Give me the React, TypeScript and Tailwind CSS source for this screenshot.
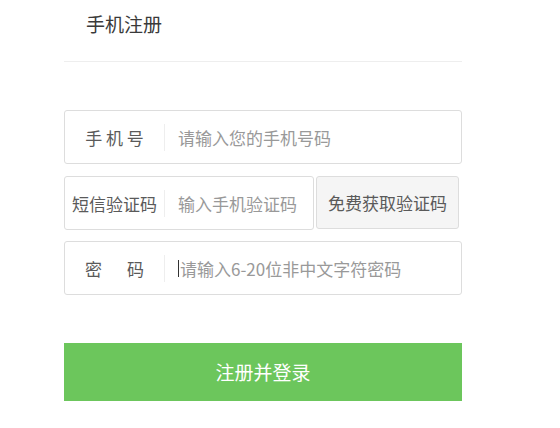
import React from "react";

const font = { fontFamily: '"Noto Sans CJK SC", "Noto Sans", sans-serif' };

function Row({ label, placeholder, caret, className = "" }: { label: React.ReactNode; placeholder: string; caret?: boolean; className?: string }) {
  return (
    <div className={`flex items-center h-[54px] border border-[#dddddd] rounded-[3px] bg-white ${className}`}>
      <div className="w-[99px] flex justify-center text-[17px] text-[#5a5a5a] whitespace-pre leading-none">{label}</div>
      <div className="w-px h-[27px] bg-[#eeeeee]" />
      <div className="flex items-center pl-[13px] text-[17px] text-[#999999] leading-none whitespace-nowrap">
        {caret && <span className="inline-block w-[1px] h-[17px] bg-[#333333] mr-[1px]" />}
        {placeholder}
      </div>
    </div>
  );
}

export default function App() {
  return (
    <div className="w-[560px] h-[428px] bg-white" style={font}>
      <div className="ml-[64px] w-[398px]">
        <div className="h-[62px] border-b border-[#eeeeee]">
          <div className="pl-[22px] pt-[12px] text-[19px] leading-[24px] text-[#3a3a3a]">手机注册</div>
        </div>
        <Row className="mt-[48px]" label="手 机 号" placeholder="请输入您的手机号码" />
        <div className="flex mt-[12px] items-start">
          <div className="w-[250px] flex items-center h-[54px] border border-[#dddddd] rounded-[3px]">
            <div className="w-[99px] text-center text-[17px] text-[#5a5a5a] leading-none">短信验证码</div>
            <div className="w-px h-[27px] bg-[#eeeeee]" />
            <div className="pl-[13px] text-[17px] text-[#999999] leading-none whitespace-nowrap">输入手机验证码</div>
          </div>
          <div className="ml-[2px] w-[143px] h-[53px] flex items-center justify-center border border-[#dddddd] rounded-[3px] bg-[#f5f5f5] text-[17px] text-[#5a5a5a]">
            免费获取验证码
          </div>
        </div>
        <Row
          className="mt-[11px]"
          label={
            <span className="flex gap-[25px]">
              <span>密</span>
              <span>码</span>
            </span>
          }
          placeholder="请输入6-20位非中文字符密码"
          caret
        />
        <div className="mt-[48px] h-[58px] bg-[#6cc65c] flex items-center justify-center text-white text-[19px]">
          注册并登录
        </div>
      </div>
    </div>
  );
}
